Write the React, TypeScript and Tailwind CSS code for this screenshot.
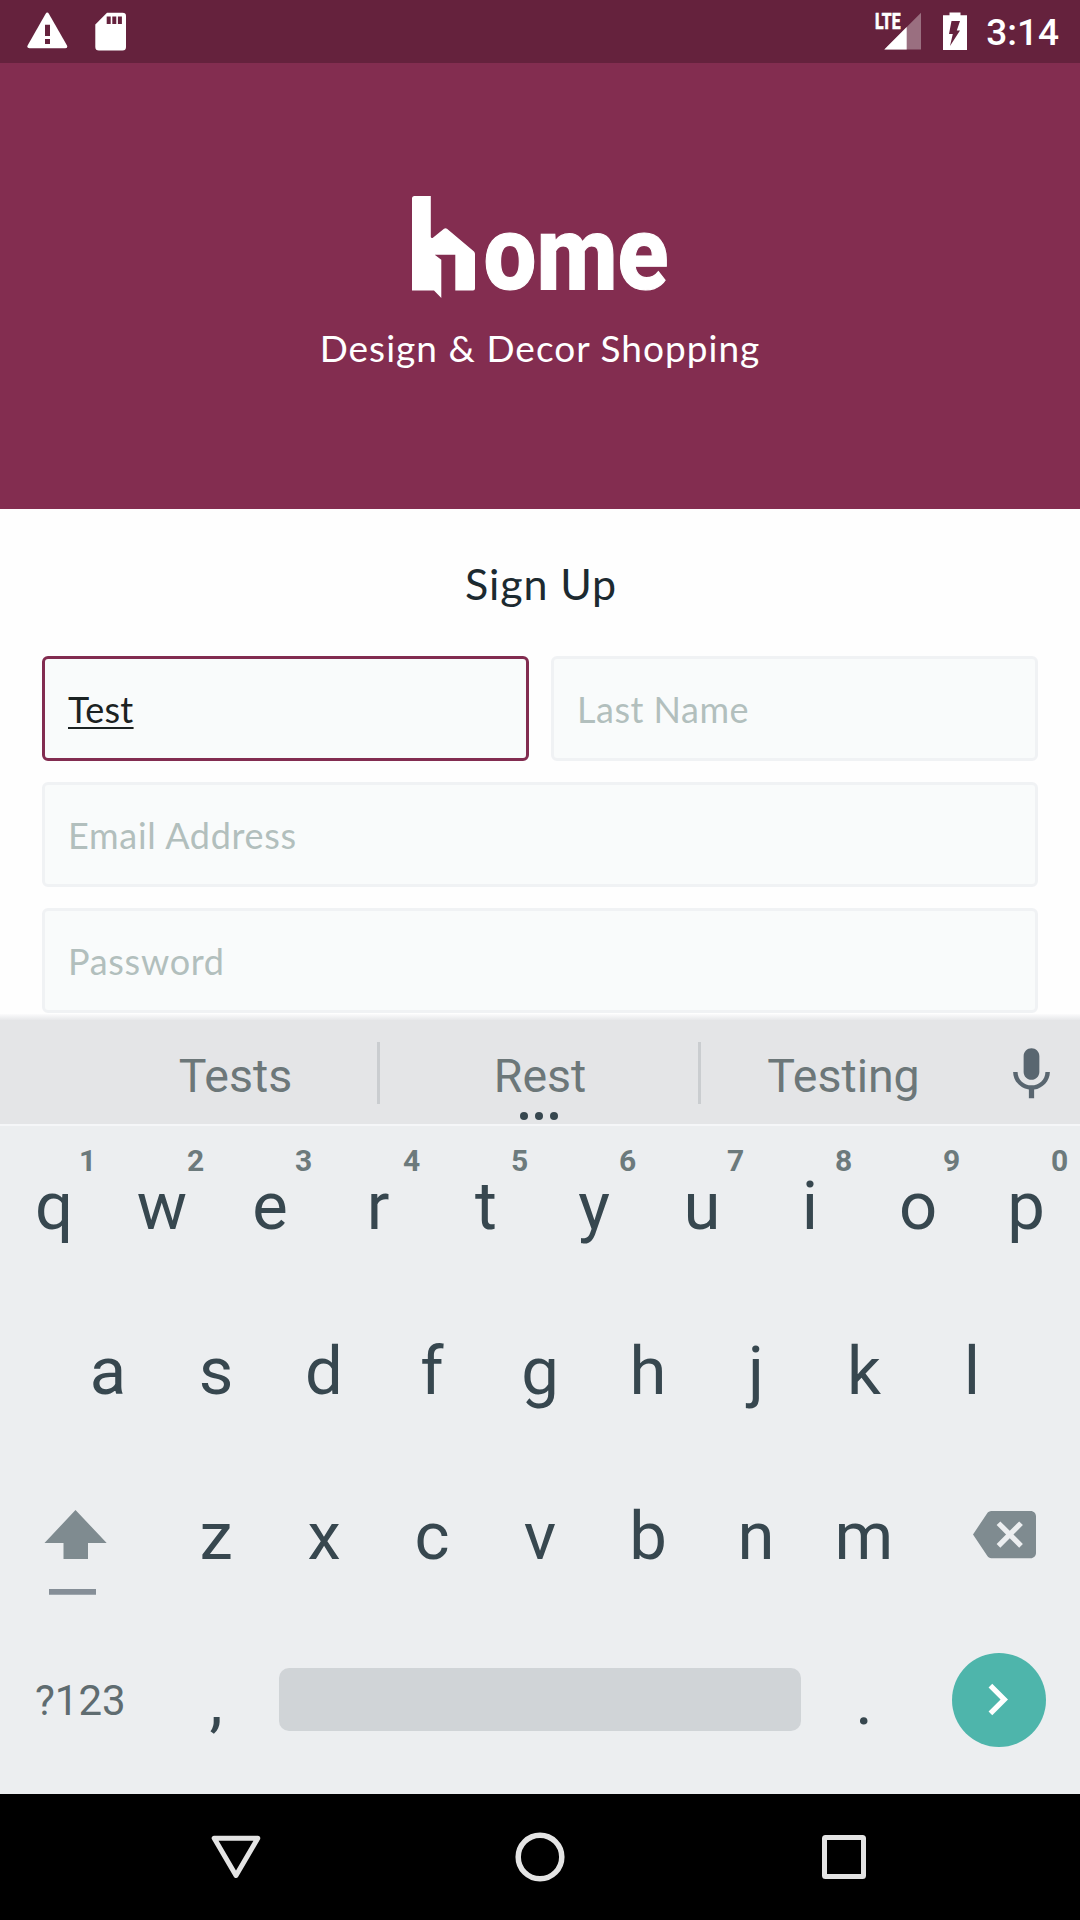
import type { ReactNode } from "react";

const topRow = ["q", "w", "e", "r", "t", "y", "u", "i", "o", "p"];
const homeRow = ["a", "s", "d", "f", "g", "h", "j", "k", "l"];
const bottomRow = ["z", "x", "c", "v", "b", "n", "m"];

function StatusBar() {
  return (
    <div className="flex h-[63px] items-start bg-[#65223d]">
      <svg className="mt-[12px] ml-[27px] h-[38px] w-[41px]" viewBox="0 0 41 38">
        <path d="M18.5 2 Q20.3 -0.8 22 2 L40 33.5 Q41 36.3 38 36.3 H2.5 Q-0.5 36.3 0.6 33.5 Z" fill="#fff" />
        <path d="M18 12.7h5v11.3h-5zM18 27h5v5h-5z" fill="#65223d" />
      </svg>
      <svg className="mt-[12px] ml-[27px] h-[39px] w-[31px]" viewBox="0 0 31 39">
        <path d="M12 .7H27.5Q31 .7 31 4V35Q31 38.5 27.5 38.5H4Q.3 38.5 .3 35V12.5Z" fill="#fff" />
        <path d="M11.7 4.5h4v7.5h-4zM17.3 4.5h4v7.5h-4zM22.9 4.5h4v7.5h-4z" fill="#65223d" />
      </svg>
      <svg className="mt-[4px] ml-auto h-[54px] w-[54px]" viewBox="-8 -8 54 54">
        <path d="M46 .7V37.5H9.3Z" fill="#fff" fillOpacity=".35" />
        <path d="M31.7 15V37.5H9.3Z" fill="#fff" />
        <path d="M0 0H27V15L25 19H0Z" fill="#65223d" />
        <text x="0" y="17.2" fontFamily="Roboto" fontWeight="800" fontSize="22.5" textLength="25.5" lengthAdjust="spacingAndGlyphs" fill="#fff" stroke="#fff" strokeWidth=".6">
          LTE
        </text>
      </svg>
      <svg className="mt-[12px] ml-[22px] h-[38px] w-[24px]" viewBox="0 0 24 38">
        <path d="M6.5 .5H17.5V3.2H24V38H0V3.2H6.5Z" fill="#fff" />
        <path d="M8.5 9H17L13.8 18.4H17L7 34L9.8 22H6Z" fill="#65223d" />
      </svg>
      <span className="mt-[9px] mr-[21px] ml-[19px] font-['Roboto',sans-serif] text-[37px] leading-[48px] font-medium text-white">3:14</span>
    </div>
  );
}

function Logo() {
  return (
    <svg className="h-[132px] w-[276px]" viewBox="-10 0 276 132" role="img" aria-label="home">
      <path
        d="M2.5 0H18.8V41Q19.5 43 21.5 41.2L32 32.8Q33.5 31.5 35 32.8L62 55.5Q63 56.5 63 58V92.5Q63 94.5 61 94.5H43.3V58.8H22.7L29.3 63.7V102L22 94.5H0V2.5Q0 0 2.5 0Z"
        fill="#fff"
      />
      <text x="71.5" y="93.3" fontFamily="Roboto" fontWeight="800" fontSize="103" textLength="185" lengthAdjust="spacingAndGlyphs" fill="#fff" stroke="#fff" strokeWidth="1.2">
        ome
      </text>
    </svg>
  );
}

function Field({ children, active }: { children: ReactNode; active?: boolean }) {
  return (
    <div
      className={
        "flex h-[105px] flex-1 items-center rounded-[6px] border-3 bg-[#f9fbfb] pl-[23px] text-[36px] " +
        (active ? "border-[#822c50] text-[#1b2222]" : "border-[#f0f2f4] text-[#b2bfbd]")
      }
    >
      {children}
    </div>
  );
}

function Key({ label, hint }: { label: string; hint?: string }) {
  return (
    <div className="relative w-[108px] text-center text-[67px] leading-[165px] text-[#37474f]">
      {label}
      {hint && <span className="absolute top-[27px] left-[68px] w-[39px] text-[30px] leading-[20px] font-bold text-[#6c7a7c]">{hint}</span>}
    </div>
  );
}

function Keyboard() {
  return (
    <div className="font-['Roboto',sans-serif]">
      <div className="h-[6px] bg-linear-to-b from-[#fbfbfc] to-[#e7e8ea]" />
      <div className="relative flex h-[104px] items-start bg-[#e4e5e7] pl-[92px] text-[46.5px] text-[#6c7779]">
        <div className="w-[285px] pl-[2px] text-center leading-[112px]">Tests</div>
        <div className="mt-[22px] h-[62px] w-[3px] bg-[#cacdd0]" />
        <div className="w-[318px] pl-[2px] text-center leading-[112px]">Rest</div>
        <div className="mt-[22px] h-[62px] w-[3px] bg-[#cacdd0]" />
        <div className="w-[285px] text-center leading-[112px]">Testing</div>
        <svg className="mt-[23px] ml-[14px] h-[63px] w-[63px]" viewBox="0 0 24 24" fill="#596670">
          <path d="M12 14c1.66 0 2.99-1.34 2.99-3L15 5c0-1.66-1.34-3-3-3S9 3.34 9 5v6c0 1.66 1.34 3 3 3zm5.3-3c0 3-2.54 5.1-5.3 5.1S6.7 14 6.7 11H5c0 3.41 2.72 6.23 6 6.72V21h2v-3.28c3.28-.48 6-3.3 6-6.72h-1.7z" />
        </svg>
        <div className="absolute bottom-[4px] left-[520px] flex gap-[7px]">
          <i className="size-[8px] rounded-full bg-[#37474f]" />
          <i className="size-[8px] rounded-full bg-[#37474f]" />
          <i className="size-[8px] rounded-full bg-[#37474f]" />
        </div>
      </div>

      <div className="h-[670px] bg-[#eceef0] shadow-[inset_0_2px_0_#f5f6f8]">
        <div className="flex">
          {topRow.map((k, i) => (
            <Key key={k} label={k} hint={String((i + 1) % 10)} />
          ))}
        </div>
        <div className="flex px-[54px]">
          {homeRow.map((k) => (
            <Key key={k} label={k} />
          ))}
        </div>
        <div className="flex">
          <div className="w-[162px] pt-[56px] pl-[44px]">
            <svg className="h-[85px] w-[63px]" viewBox="0 0 63 85">
              <path d="M31.5 0L62.7 33H44V49H19.5V33H.5Z" fill="#7f8b90" />
              <path d="M5 79h47v5.7H5z" fill="#858e97" />
            </svg>
          </div>
          {bottomRow.map((k) => (
            <Key key={k} label={k} />
          ))}
          <div className="w-[162px] pt-[49px] pl-[55px]">
            <svg className="size-[63px]" viewBox="0 0 24 24" fill="#7f8b90">
              <path d="M22 3H7c-.69 0-1.23.35-1.59.88L0 12l5.41 8.11c.36.53.9.89 1.59.89h15c1.1 0 2-.9 2-2V5c0-1.1-.9-2-2-2zm-3 12.59L17.59 17 14 13.41 10.41 17 9 15.59 12.59 12 9 8.41 10.41 7 14 10.59 17.59 7 19 8.41 15.41 12 19 15.59z" />
            </svg>
          </div>
        </div>
        <div className="flex">
          <div className="w-[162px] pl-[35px] text-[42px] leading-[163px] text-[#5f6c70]">?123</div>
          <Key label="," />
          <div className="mx-[9px] mt-[49px] h-[63px] w-[522px] rounded-[10px] bg-[#d0d4d7]" />
          <Key label="." />
          <div className="w-[162px] pt-[34px] pl-[34px]">
            <div className="size-[94px] rounded-full bg-[#4eb5ab] pt-[15px] pl-[14px]">
              <svg className="size-[63px]" viewBox="0 0 24 24" fill="#fff">
                <path d="M10 6L8.59 7.41 13.17 12l-4.58 4.59L10 18l6-6z" />
              </svg>
            </div>
          </div>
        </div>
      </div>
    </div>
  );
}

function NavBar() {
  return (
    <div className="flex h-[126px] items-center justify-between bg-black px-[206px]">
      <svg className="size-[60px]" viewBox="0 0 60 60" fill="none" stroke="#e4e4e4" strokeWidth="5" strokeLinejoin="round">
        <path d="M8.2 11.2H51.8L30 48.5Z" />
      </svg>
      <svg className="size-[60px]" viewBox="0 0 60 60" fill="none" stroke="#e4e4e4" strokeWidth="5.5">
        <circle cx="30" cy="30" r="21.8" />
      </svg>
      <svg className="size-[60px]" viewBox="0 0 60 60" fill="none" stroke="#e4e4e4" strokeWidth="5" strokeLinejoin="round">
        <rect x="10.5" y="10.5" width="39" height="39" rx="1" />
      </svg>
    </div>
  );
}

export default function App() {
  return (
    <div className="h-[1920px] w-[1080px] overflow-hidden bg-[#fefefe] font-['Lato',sans-serif]">
      <StatusBar />
      <header className="flex h-[446px] flex-col items-center bg-[#832d50] pt-[133px]">
        <Logo />
        <p className="-mt-[5px] text-[37px] leading-[50px] tracking-[1.03px] text-white">Design &amp; Decor Shopping</p>
      </header>
      <main className="flex h-[505px] flex-col gap-[21px] px-[42px] pt-[50px]">
        <h1 className="mb-[26px] pl-[2px] text-center text-[43px] leading-[50px] tracking-[0.9px] text-[#1c2a30]">Sign Up</h1>
        <div className="flex gap-[22px]">
          <Field active>
            <span className="tracking-[0.3px] underline decoration-2 underline-offset-[4px]">Test</span>
          </Field>
          <Field>
            <span className="tracking-[0.5px]">Last Name</span>
          </Field>
        </div>
        <div className="flex">
          <Field>
            <span className="tracking-[0.7px]">Email Address</span>
          </Field>
        </div>
        <div className="flex">
          <Field>
            <span className="tracking-[0.7px]">Password</span>
          </Field>
        </div>
      </main>
      <Keyboard />
      <NavBar />
    </div>
  );
}
